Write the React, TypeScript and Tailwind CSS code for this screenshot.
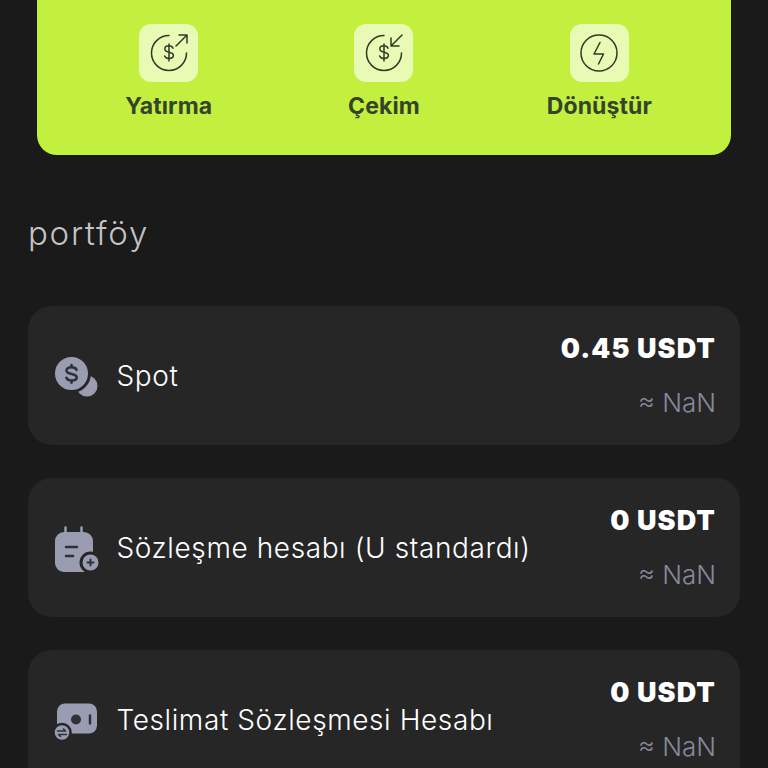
import React from 'react';

const font = { fontFamily: 'Inter' };

const DepositIcon = ({ kind }: { kind: 'in' | 'out' }) => (
  <svg width="40" height="40" viewBox="0 0 40 40" fill="none" stroke="#2f3b26" strokeWidth="1.5" strokeLinecap="round" strokeLinejoin="round">
    <path d="M20 2.500 A17.500 17.500 0 1 0 37.500 20" />
    <path d="M20 11v17M24 15.200c-.6-1.500-2.200-2.400-4-2.400-2.400 0-4.200 1.300-4.200 3.200 0 4.400 8.600 2 8.600 6.300 0 1.900-2 3.200-4.400 3.200-2 0-3.700-1-4.300-2.600" />
    {kind === 'out' ? (
      <path d="M27 13 38 2M30 2h8v8" />
    ) : (
      <path d="M38 2 27 13M27 5v8h8" />
    )}
  </svg>
);

const BoltIcon = () => (
  <svg width="40" height="40" viewBox="0 0 40 40" fill="none" stroke="#2f3b26" strokeWidth="1.500" strokeLinecap="round" strokeLinejoin="round">
    <circle cx="20" cy="20" r="18" />
    <path d="M21 9.500 15 21h9.500l-5 10" />
  </svg>
);

const SpotIcon = () => (
  <svg width="44" height="44" viewBox="0 -2 44 44" className="overflow-visible">
    <circle cx="33" cy="30" r="10.500" fill="#9a9db1" />
    <circle cx="17.500" cy="17.500" r="18" fill="#9a9db1" stroke="#262626" strokeWidth="3" />
    <path d="M22.500 13.800c-.7-1.700-2.600-2.500-5-2.500-2.800 0-5 1.300-5 3.200 0 4.700 10.200 2.300 10.200 6.800 0 1.900-2.200 3.200-5.100 3.200-2.500 0-4.500-.9-5.200-2.700M17.500 9v2.300M17.500 24.500v2.300" fill="none" stroke="#2f3038" strokeWidth="2.600" strokeLinecap="round" />
  </svg>
);

const ContractIcon = () => (
  <svg width="46" height="46" viewBox="0 0 46 46" className="overflow-visible">
    <path d="M11.500 2.500v7M27.500 2.500v7" stroke="#9a9db1" strokeWidth="2.500" strokeLinecap="round" />
    <rect x="1" y="7" width="38" height="40" rx="9" fill="#9a9db1" />
    <path d="M12 22h11M12 31h7" stroke="#2f3038" strokeWidth="2.600" strokeLinecap="round" />
    <circle cx="36.500" cy="37.500" r="9.500" fill="#9a9db1" stroke="#262626" strokeWidth="3" />
    <path d="M36.500 34.500v6M33.500 37.500h6" stroke="#2f3038" strokeWidth="2" strokeLinecap="round" />
  </svg>
);

const DeliveryIcon = () => (
  <svg width="46" height="40" viewBox="0 0 46 40" className="overflow-visible">
    <rect x="3" y="3.500" width="40" height="30" rx="8" fill="#9a9db1" />
    <circle cx="22" cy="19.500" r="5" fill="#2f3038" />
    <path d="M36 15.500v8" stroke="#2f3038" strokeWidth="2.500" strokeLinecap="round" />
    <circle cx="8" cy="32.500" r="8.500" fill="#9a9db1" stroke="#262626" strokeWidth="2.500" />
    <path d="M3.500 31h8l-2-2M12.500 34.500h-8l2 2" fill="none" stroke="#2f3038" strokeWidth="1.600" strokeLinecap="round" strokeLinejoin="round" />
  </svg>
);

const actions = [
  { label: 'Yatırma', icon: <DepositIcon kind="out" /> },
  { label: 'Çekim', icon: <DepositIcon kind="in" /> },
  { label: 'Dönüştür', icon: <BoltIcon /> },
];

const accounts = [
  { name: 'Spot', amount: '0.45 USDT', icon: <SpotIcon /> },
  { name: 'Sözleşme hesabı (U standardı)', amount: '0 USDT', icon: <ContractIcon /> },
  { name: 'Teslimat Sözleşmesi Hesabı', amount: '0 USDT', icon: <DeliveryIcon /> },
];

export default function App() {
  return (
    <div className="h-[768px] overflow-hidden bg-[#1a1a1a]" style={font}>
      {/* Quick actions */}
      <div className="mx-[37px] grid h-[155px] grid-cols-3 rounded-b-[20px] bg-[#c3f03f] pt-6 pr-[24px] pl-[24px]">
        {actions.map((a) => (
          <div key={a.label} className="flex flex-col items-center">
            <div className="flex h-[58px] w-[59px] items-center justify-center rounded-[12px] bg-[#e8fab4]">
              {a.icon}
            </div>
            <span className="mt-[10px] text-[23px] leading-[28px] font-bold tracking-[0.1px] text-[#35432a]">{a.label}</span>
          </div>
        ))}
      </div>

      <h2 className="mt-[57px] ml-7 text-[33px] leading-[42px] font-light tracking-[1.75px] text-[#c4c4c4]">portföy</h2>

      {/* Accounts */}
      <div className="mx-7 mt-[52px] flex flex-col gap-[33px]">
        {accounts.map((acc) => (
          <div key={acc.name} className="flex h-[139px] shrink-0 items-center rounded-[24px] bg-[#262626] pr-6 pl-[26px]">
            <div className="flex w-[62.500px] shrink-0 items-center">{acc.icon}</div>
            <span className="flex-1 text-[28px] leading-[36px] font-light tracking-[0.6px] text-white">{acc.name}</span>
            <div className="flex flex-col items-end gap-[18px]">
              <span className="text-[27px] leading-[36px] font-black tracking-[1.1px] text-white">{acc.amount}</span>
              <span className="text-[26px] leading-[36px] font-light text-[#868a9c]">≈ NaN</span>
            </div>
          </div>
        ))}
      </div>
    </div>
  );
}
